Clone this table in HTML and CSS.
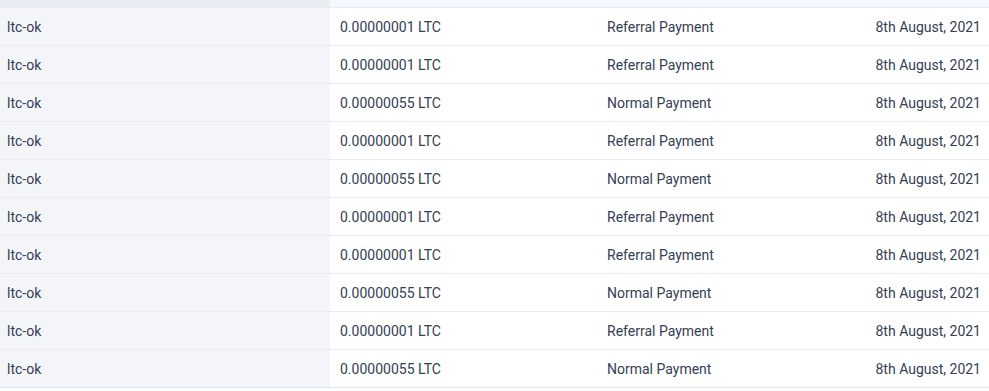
FILE: index.html
```html
<!DOCTYPE html>
<html>
<head>
<meta charset="utf-8">
<link rel="stylesheet" href="styles.css">
</head>
<body>
<div class="table">
  <div class="row top"><div class="cell c1"></div><div class="cell c2"></div><div class="cell c3"></div><div class="cell c4"></div></div>
  <div class="row"><div class="cell c1">ltc-ok</div><div class="cell c2">0.00000001 LTC</div><div class="cell c3">Referral Payment</div><div class="cell c4">8th August, 2021</div></div>
  <div class="row"><div class="cell c1">ltc-ok</div><div class="cell c2">0.00000001 LTC</div><div class="cell c3">Referral Payment</div><div class="cell c4">8th August, 2021</div></div>
  <div class="row"><div class="cell c1">ltc-ok</div><div class="cell c2">0.00000055 LTC</div><div class="cell c3">Normal Payment</div><div class="cell c4">8th August, 2021</div></div>
  <div class="row"><div class="cell c1">ltc-ok</div><div class="cell c2">0.00000001 LTC</div><div class="cell c3">Referral Payment</div><div class="cell c4">8th August, 2021</div></div>
  <div class="row"><div class="cell c1">ltc-ok</div><div class="cell c2">0.00000055 LTC</div><div class="cell c3">Normal Payment</div><div class="cell c4">8th August, 2021</div></div>
  <div class="row"><div class="cell c1">ltc-ok</div><div class="cell c2">0.00000001 LTC</div><div class="cell c3">Referral Payment</div><div class="cell c4">8th August, 2021</div></div>
  <div class="row"><div class="cell c1">ltc-ok</div><div class="cell c2">0.00000001 LTC</div><div class="cell c3">Referral Payment</div><div class="cell c4">8th August, 2021</div></div>
  <div class="row"><div class="cell c1">ltc-ok</div><div class="cell c2">0.00000055 LTC</div><div class="cell c3">Normal Payment</div><div class="cell c4">8th August, 2021</div></div>
  <div class="row"><div class="cell c1">ltc-ok</div><div class="cell c2">0.00000001 LTC</div><div class="cell c3">Referral Payment</div><div class="cell c4">8th August, 2021</div></div>
  <div class="row last"><div class="cell c1">ltc-ok</div><div class="cell c2">0.00000055 LTC</div><div class="cell c3">Normal Payment</div><div class="cell c4">8th August, 2021</div></div>
</div>
</body>
</html>
```
FILE: styles.css
```css
html, body {
  margin: 0;
  padding: 0;
  background: #ffffff;
}
body {
  font-family: Roboto, "Liberation Sans", sans-serif;
  font-size: 14px;
  color: #344054;
}
.table {
  display: flex;
  flex-direction: column;
  width: 989px;
}
.row {
  display: grid;
  grid-template-columns: 330px 267px 1fr 200px;
  height: 37px;
  border-bottom: 1px solid #e8ecf2;
}
.row.top {
  height: 7px;
  background: #f5f8fd;
}
.row.top .c1 {
  background: #eaedf3;
}
.row.last {
  border-bottom: 1px solid #dde4ee;
}
.cell {
  display: flex;
  align-items: center;
  padding: 0 10px;
  white-space: nowrap;
}
.c1 {
  background: #f3f5f9;
  padding-left: 7px;
}
.c4 {
  justify-content: flex-end;
  padding-right: 8px;
}
```
